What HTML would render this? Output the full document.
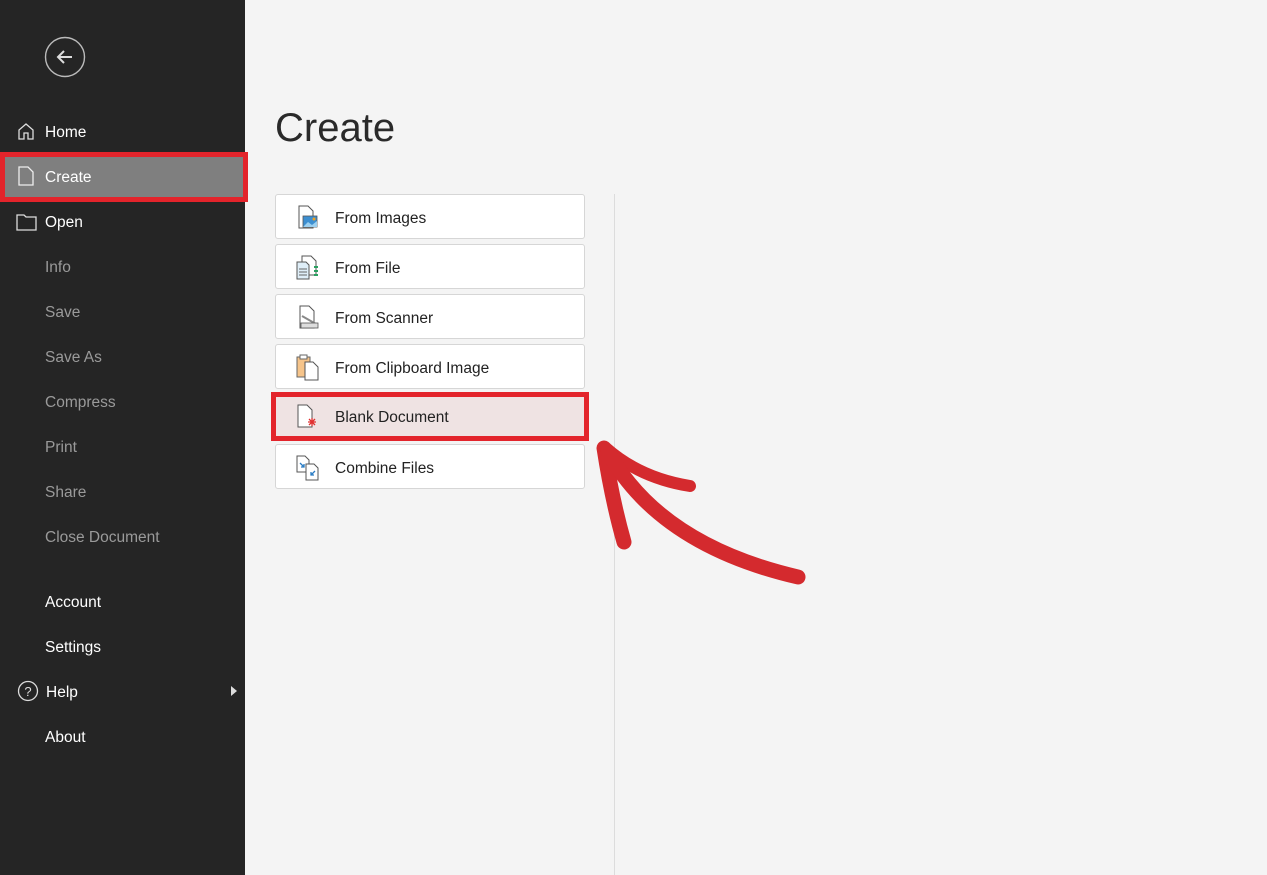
<!DOCTYPE html>
<html><head><meta charset="utf-8"><style>
*{margin:0;padding:0;box-sizing:border-box}
body{width:1267px;height:875px;background:#f4f4f4;font-family:"Liberation Sans",sans-serif;position:relative;overflow:hidden}
#side{position:absolute;left:0;top:0;width:245px;height:875px;background:#252525}
.it{position:absolute;left:45px;font-size:15.5px;color:#fff;line-height:20px;top:2px}
.dim{color:#9a9a9a}
.ic{position:absolute;left:16px}
.btn{position:absolute;left:275px;width:310px;height:45px;background:#fff;border:1px solid #d6d6d6;border-radius:3px;font-size:15.5px;color:#222}
.btn span{position:absolute;left:59px;top:15px}
.btn svg{position:absolute;left:20px;top:9px}
</style></head><body>
<div id="side">
<svg style="position:absolute;left:44px;top:36px" width="42" height="42"><circle cx="21" cy="21" r="19.5" fill="none" stroke="#bbb" stroke-width="1.4"/><path d="M14 21h14M20 15l-6 6 6 6" fill="none" stroke="#ddd" stroke-width="2"/></svg>
<svg class="ic" style="top:121px" width="20" height="20"><path d="M3 18V9l7-6 7 6v9h-5v-6H8v6z" fill="none" stroke="#ddd" stroke-width="1.3"/></svg>
<div class="it" style="top:123px">Home</div>
<div style="position:absolute;left:0;top:152px;width:248px;height:50px;border:5px solid #e3242b;background:#7f7f7f"></div>
<svg class="ic" style="top:165px" width="20" height="22"><path d="M3 2h9l5 5v13H3z" fill="none" stroke="#eee" stroke-width="1.3"/></svg>
<div class="it" style="top:168px">Create</div>
<svg class="ic" style="top:212px" width="22" height="20"><path d="M1 3h7l2 2h10v13H1z" fill="none" stroke="#ddd" stroke-width="1.3"/></svg>
<div class="it" style="top:213px">Open</div>
<div class="it dim" style="top:258px">Info</div>
<div class="it dim" style="top:303px">Save</div>
<div class="it dim" style="top:348px">Save As</div>
<div class="it dim" style="top:393px">Compress</div>
<div class="it dim" style="top:438px">Print</div>
<div class="it dim" style="top:483px">Share</div>
<div class="it dim" style="top:528px">Close Document</div>
<div class="it" style="top:593px">Account</div>
<div class="it" style="top:638px">Settings</div>
<svg class="ic" style="top:680px;left:17px" width="22" height="22"><circle cx="11" cy="11" r="9.5" fill="none" stroke="#ddd" stroke-width="1.3"/><text x="11" y="16" font-size="13" fill="#ddd" text-anchor="middle" font-family="Liberation Sans">?</text></svg>
<div class="it" style="top:683px;left:46px">Help</div>
<svg style="position:absolute;left:231px;top:686px" width="6" height="10"><path d="M0 0l6 5-6 5z" fill="#ddd"/></svg>
<div class="it" style="top:728px">About</div>
</div>
<div style="position:absolute;left:275px;top:104px;font-size:40px;color:#2a2a2a;line-height:48px">Create</div>
<div style="position:absolute;left:614px;top:194px;width:1px;height:681px;background:#dcdcdc"></div>
<div class="btn" style="top:194px"><svg width="26" height="28"><path d="M3 2h9l5 5v17H3z" fill="#fff" stroke="#555"/><rect x="7" y="12" width="14" height="11" fill="#3d8fd1" stroke="#555" stroke-width=".8"/><path d="M7 23l5-5 4 3 5-4v6z" fill="#9cd0f0"/><circle cx="18" cy="15" r="1.5" fill="#f0a020"/></svg><span>From Images</span></div>
<div class="btn" style="top:244px"><svg width="28" height="28"><path d="M6 2h9l5 5v14H6z" fill="#fff" stroke="#555"/><path d="M1 8h9l3 3v14H1z" fill="#dfeef8" stroke="#555"/><path d="M3 15h8M3 18h8M3 21h8" stroke="#666"/><path d="M18 13h4M18 17h4M18 21h4" stroke="#2aa060" stroke-width="2"/></svg><span>From File</span></div>
<div class="btn" style="top:294px"><svg width="28" height="28"><path d="M4 2h9l5 5v17H4z" fill="#fff" stroke="#555"/><path d="M6 12l14 8" stroke="#888" stroke-width="2"/><rect x="5" y="19" width="17" height="5" fill="#ddd" stroke="#555" stroke-width=".8"/></svg><span>From Scanner</span></div>
<div class="btn" style="top:344px"><svg width="28" height="28"><rect x="1" y="3" width="13" height="20" fill="#f6c48a" stroke="#666"/><rect x="4" y="1" width="7" height="4" fill="#fff" stroke="#666"/><path d="M9 8h8l5 5v13H9z" fill="#fff" stroke="#555"/></svg><span>From Clipboard Image</span></div>
<div style="position:absolute;left:271px;top:392px;width:318px;height:49px;border:5px solid #e3242b;background:#efe3e3"></div>
<svg style="position:absolute;left:295px;top:403px" width="28" height="28"><path d="M3 2h9l5 5v17H3z" fill="#fff" stroke="#555"/><path d="M14 16l6 6M20 16l-6 6M17 15v8M13 19h8" stroke="#e03030" stroke-width="1.3"/></svg>
<div style="position:absolute;left:335px;top:409px;font-size:15.5px;color:#222">Blank Document</div>
<div class="btn" style="top:444px"><svg width="28" height="28"><path d="M1 2h8l4 4v12H1z" fill="#fff" stroke="#555"/><path d="M10 10h8l4 4v12H10z" fill="#fff" stroke="#555"/><path d="M4 9l4 4M8 10v3H5M19 17l-4 4M15 18v3h3" stroke="#2a7cc4" stroke-width="1.3" fill="none"/></svg><span>Combine Files</span></div>
<svg style="position:absolute;left:0;top:0" width="1267" height="875">
<g fill="none" stroke="#d42a2e" stroke-linecap="round">
<path d="M604 448 Q612 500 624 542" stroke-width="15"/>
<path d="M606 448 Q640 478 690 486" stroke-width="12"/>
<path d="M608 452 Q660 545 798 577" stroke-width="15"/>
</g>
</svg>
</body></html>
